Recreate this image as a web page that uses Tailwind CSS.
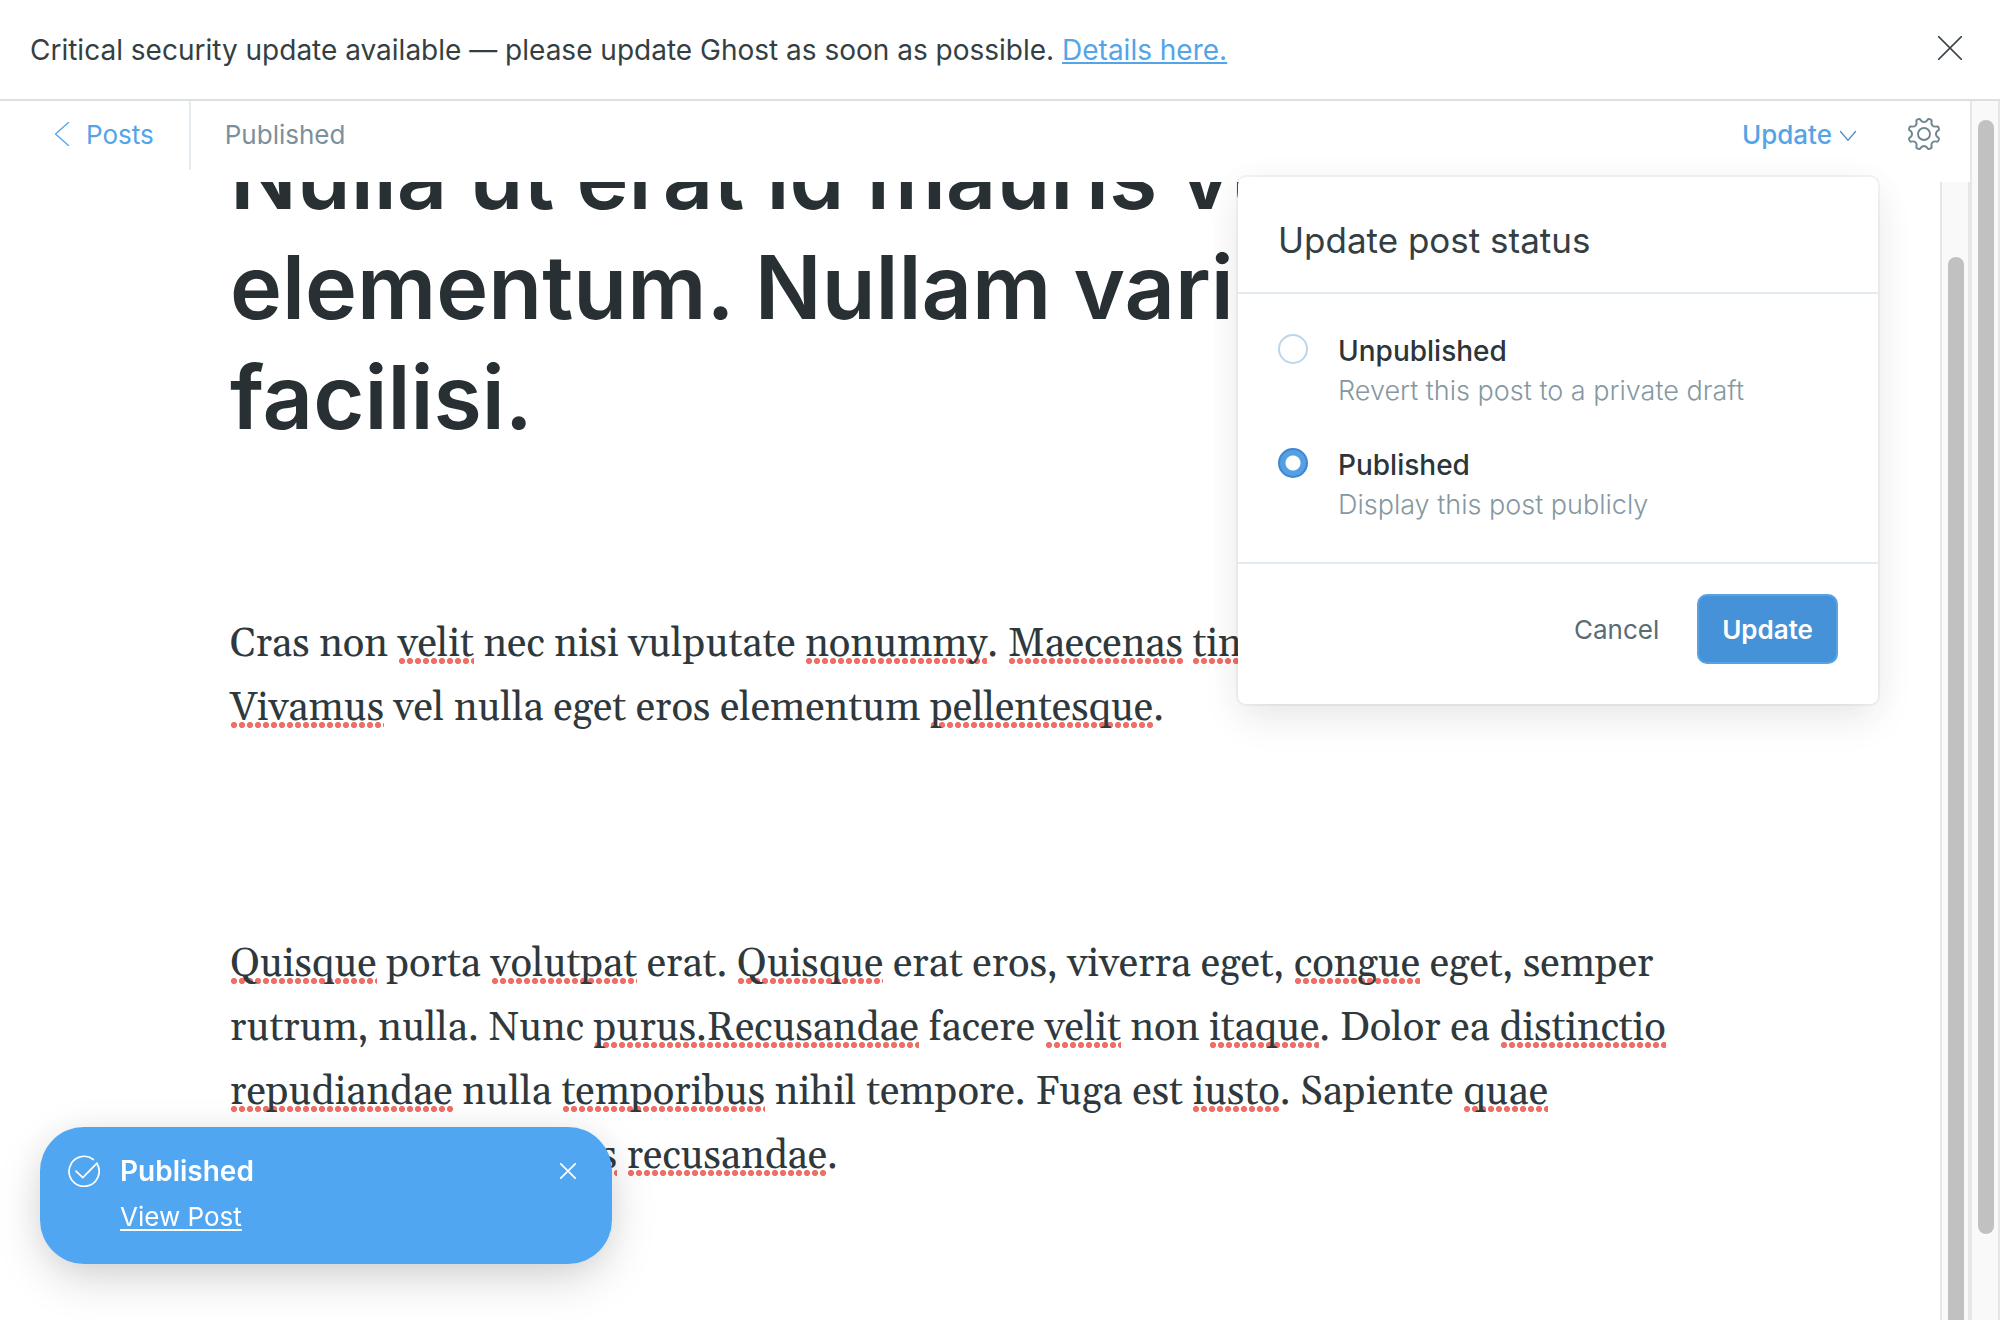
<!DOCTYPE html>
<html lang="en">
<head>
<meta charset="utf-8">
<meta name="viewport" content="width=device-width, initial-scale=1">
<title>Ghost editor</title>
<script src="https://cdn.jsdelivr.net/npm/@tailwindcss/browser@4"></script>
</head>
<body class="flex h-screen flex-col overflow-hidden bg-white font-['Inter',sans-serif] text-[26px] text-[#343f44]">

  <!-- Security notice -->
  <aside class="flex h-[101px] shrink-0 items-center justify-between border-b-2 border-[#dcdfdf] pr-[38px] pl-[30px] text-[28px]">
    <p>Critical security update available — please update Ghost as soon as possible. <a href="#details" class="text-[#54a4e8] underline decoration-2 underline-offset-2 [text-decoration-skip-ink:none]">Details here.</a></p>
    <button type="button" aria-label="Dismiss" class="-mt-1">
      <svg class="size-6" viewBox="0 0 24 24" fill="none" stroke="#394449" stroke-width="1.5" stroke-linecap="round"><path d="M.6.6l22.8 22.8M23.4.6L.6 23.4"/></svg>
    </button>
  </aside>

  <div class="flex min-h-0 flex-1">
    <div class="flex min-w-0 flex-1 flex-col">

      <!-- Editor toolbar -->
      <header class="relative z-10 flex h-[81px] shrink-0 items-start pr-[29px] pl-[54px]">
        <a href="#posts" class="flex h-[66px] items-center gap-4 pr-[35px] text-[#54a4e8]">
          <svg class="h-6 w-4" viewBox="0 0 16 24" fill="none" stroke="currentColor" stroke-width="1.3" stroke-linecap="round" stroke-linejoin="round"><path d="M14.500.5L1.500 12l13 11.500"/></svg>
          Posts
        </a>
        <div class="h-[69px] border-l-2 border-[#e3ebf0] pl-[34px] leading-[68px] text-[#7c909b]">Published</div>
        <button type="button" class="ml-auto flex h-[66px] items-center gap-2 font-medium text-[#54a4e8]">
          Update
          <svg class="mt-1 h-[10px] w-4" viewBox="0 0 16 10" fill="none" stroke="#4f88bd" stroke-width="1.300" stroke-linecap="round" stroke-linejoin="round"><path d="M.5.5L8 9.300 15.500.5"/></svg>
        </button>
        <button type="button" aria-label="Post settings" class="ml-[51px] flex h-[66px] items-center">
          <svg class="size-[34px]" viewBox="-17 -17 34 34" fill="none" stroke="#6f858f" stroke-width="1.900" stroke-linejoin="round"><path d="M15 4.200Q15.300 6.400 13.600 7.700C8.900 6.500 6.500 8.900 7.700 13.600Q6.400 15.300 4.200 15C1.700 10.900-1.700 10.900-4.200 15Q-6.400 15.300-7.700 13.600C-6.500 8.900-8.900 6.500-13.600 7.700Q-15.300 6.400-15 4.200C-10.900 1.700-10.900-1.700-15-4.200Q-15.300-6.400-13.600-7.700C-8.900-6.500-6.500-8.900-7.700-13.600Q-6.400-15.300-4.200-15C-1.700-10.900 1.700-10.900 4.200-15Q6.400-15.300 7.700-13.600C6.500-8.900 8.900-6.500 13.600-7.700Q15.300-6.400 15-4.200C10.900-1.700 10.900 1.700 15 4.200Z"/><circle r="6"/></svg>
        </button>

        <!-- Publish menu -->
        <form class="absolute top-[76px] right-[92px] w-[640px] rounded-lg bg-white shadow-[0_0_0_2px_rgba(0,0,0,0.04),0_16px_40px_-4px_rgba(39,44,49,0.10),0_2px_40px_rgba(39,44,49,0.03)]">
          <h2 class="border-b-2 border-[#e3ecf3] px-10 pt-[41px] pb-[30px] text-[35px] leading-11">Update post status</h2>
          <div class="flex flex-col gap-[34px] border-b-2 border-[#e3ecf3] px-10 pt-10 pb-[34px]">
            <label class="flex items-start gap-[30px]">
              <input type="radio" name="status" class="size-[30px] shrink-0 appearance-none rounded-full border-2 border-[#bdd5e8] bg-white">
              <span class="flex flex-col">
                <span class="text-[28px] leading-[34px] font-medium text-[#2c3539]">Unpublished</span>
                <span class="text-[27px] leading-[46px] font-light text-[#8598a2]">Revert this post to a private draft</span>
              </span>
            </label>
            <label class="flex items-start gap-[30px]">
              <input type="radio" name="status" checked class="size-[30px] shrink-0 appearance-none rounded-full border-2 border-[#3e87d2] bg-[radial-gradient(circle,#fff_7px,#54a0e3_8px)]">
              <span class="flex flex-col">
                <span class="text-[28px] leading-[34px] font-medium text-[#2c3539]">Published</span>
                <span class="text-[27px] leading-[46px] font-light text-[#8598a2]">Display this post publicly</span>
              </span>
            </label>
          </div>
          <div class="flex items-center justify-end gap-[38px] px-10 pt-[30px] pb-10">
            <button type="button" class="text-[#5a6b74]">Cancel</button>
            <button type="submit" class="h-[70px] rounded-[10px] border-2 border-[#56a3e8] bg-[#4592d8] px-[23px] font-semibold text-white">Update</button>
          </div>
        </form>
      </header>

      <!-- Post content -->
      <div class="flex min-h-0 flex-1 overflow-hidden">
        <main class="min-w-0 flex-1 overflow-hidden pr-[230px] pl-[230px]">
          <article class="-mt-[60px] font-['Gelasio','Georgia','Liberation_Serif',serif] text-[40px] leading-[64px] text-[#2f393d] [&_span]:bg-[radial-gradient(circle,#ee6f66_2.700px,transparent_3.500px)] [&_span]:bg-[length:8px_6px] [&_span]:bg-[position:0_calc(100%-6px)] [&_span]:bg-repeat-x">
            <h1 class="font-['Inter',sans-serif] text-[88px] leading-[110px] font-semibold text-[#283033]">Nulla ut erat id mauris vulputate elementum. Nullam varius. Nulla facilisi.</h1>
            <p class="mt-[161px]">Cras non <span>velit</span> nec nisi vulputate <span>nonummy</span>. <span>Maecenas</span> <span>tincidunt</span> lacus at velit. <span>Vivamus</span> vel nulla eget eros elementum <span>pellentesque</span>.</p>
            <p class="mt-48"><span>Quisque</span> porta <span>volutpat</span> erat. <span>Quisque</span> erat eros, viverra eget, <span>congue</span> eget, semper rutrum, nulla. Nunc <span>purus.Recusandae</span> facere <span>velit</span> non <span>itaque</span>. Dolor ea <span>distinctio</span> <span>repudiandae</span> nulla <span>temporibus</span> nihil tempore. Fuga est <span>iusto</span>. Sapiente <span>quae</span> <span>consequatur</span> et <span>officiis</span> <span>recusandae</span>.</p>
          </article>
        </main>
        <div aria-hidden="true" class="w-[30px] shrink-0 border-x-2 border-[#e6e6e6] bg-[#f9f9f9] pt-[75px] pr-1 pl-[6px]">
          <div class="h-full rounded-t-full bg-[#c1c1c1]"></div>
        </div>
      </div>
    </div>

    <div aria-hidden="true" class="w-[30px] shrink-0 border-x-2 border-[#e6e6e6] bg-[#f9f9f9] pt-[19px] pr-1 pb-[86px] pl-[6px]">
      <div class="h-full rounded-full bg-[#c1c1c1]"></div>
    </div>
  </div>

  <!-- Toast -->
  <div role="status" class="fixed bottom-14 left-10 z-20 flex w-[572px] items-start gap-5 rounded-[44px] bg-[#51a6f2] pt-[22px] pr-9 pb-[25px] pl-7 leading-[45px] text-white shadow-[0_16px_48px_-4px_rgba(0,0,0,0.18),0_0_40px_rgba(0,0,0,0.05)]">
    <svg class="my-[6px] size-8 shrink-0" viewBox="0 0 32 32" fill="none" stroke="currentColor" stroke-width="1.700" stroke-linecap="round" stroke-linejoin="round"><path d="M25.300 4.500A15 15 0 1 0 29 8.700"/><path d="M8 16.200l6.800 6.500L29 8.200"/></svg>
    <div class="flex-1">
      <p class="text-[28px] leading-[45px] font-semibold">Published</p>
      <a href="#view" class="underline decoration-2 underline-offset-3 [text-decoration-skip-ink:none]">View Post</a>
    </div>
    <button type="button" aria-label="Close" class="flex h-11 items-center">
      <svg class="size-4" viewBox="0 0 16 16" fill="none" stroke="currentColor" stroke-width="1.700" stroke-linecap="round"><path d="M.8.8l14.400 14.400M15.200.8L.8 15.200"/></svg>
    </button>
  </div>
</body>
</html>
